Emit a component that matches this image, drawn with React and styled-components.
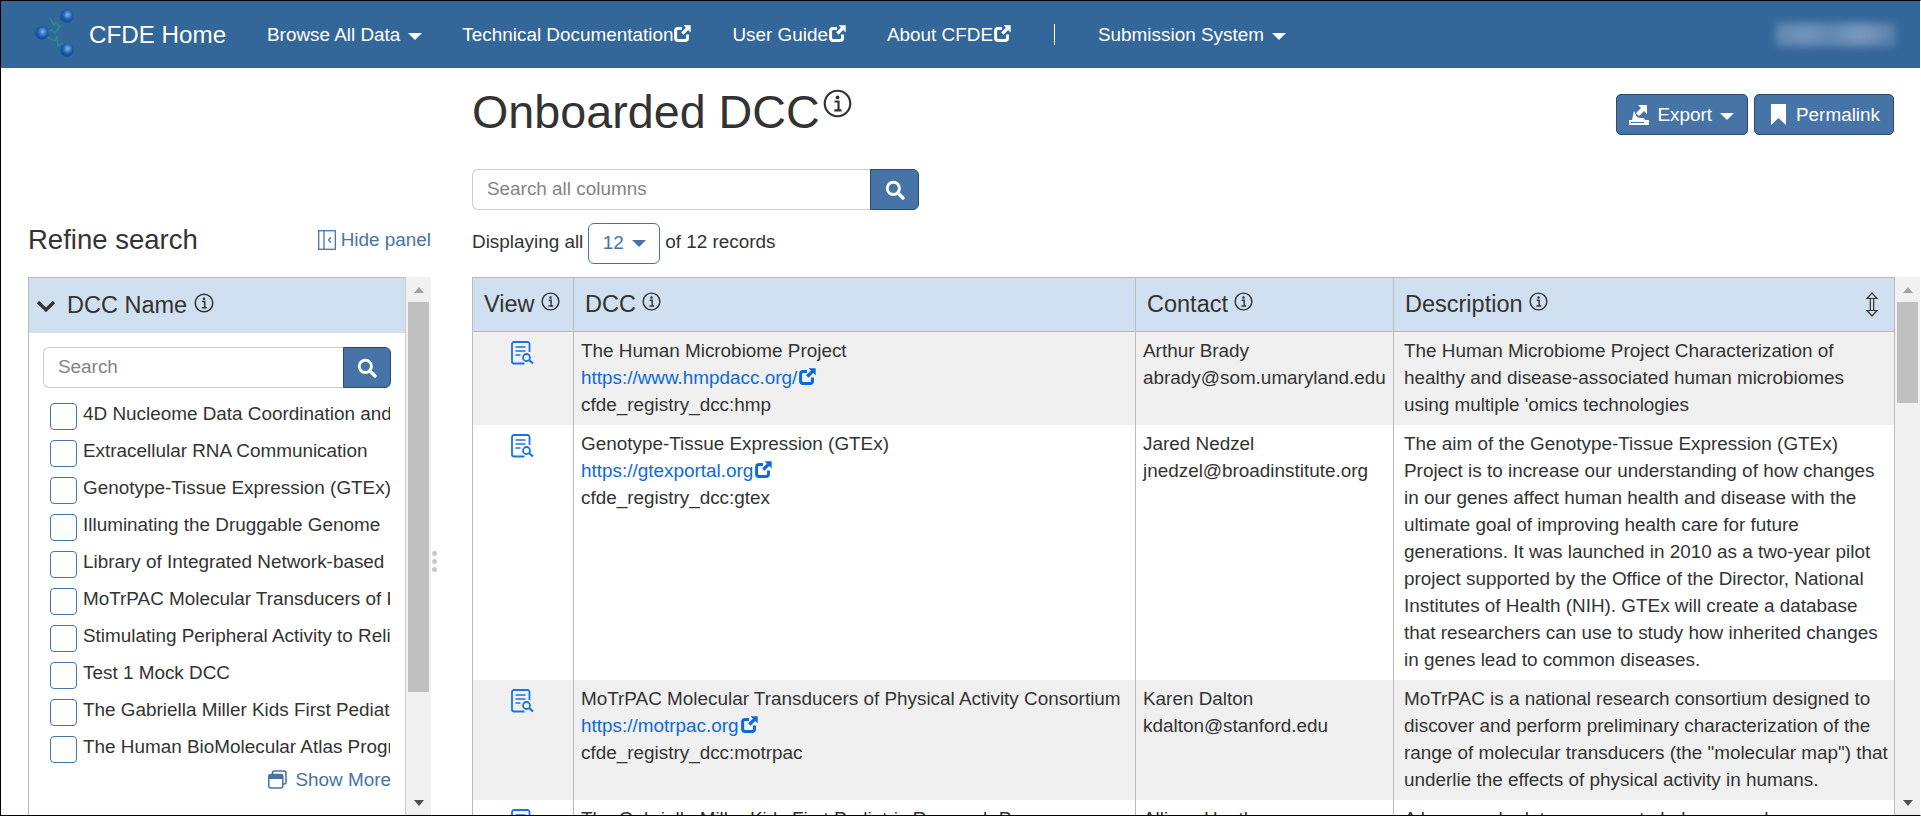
import React from 'react';
import styled, { createGlobalStyle } from 'styled-components';

const Global = createGlobalStyle`
  html, body { margin: 0; padding: 0; background: #fff; overflow: hidden; }
  * { box-sizing: border-box; }
`;
const Frame = styled.div`
  width: 1921px; height: 816px; border: 1px solid #000; border-right: 1px solid #fff;
  display: flex; flex-direction: column; overflow: hidden;
  font: 18.9px/27px "Liberation Sans", Arial, sans-serif; color: #333;
`;
const Navbar = styled.nav`
  height: 67px; flex: none; background: #336699; color: #fff;
  display: flex; align-items: center; position: relative;
`;
const Brand = styled.div`
  display: flex; align-items: center; width: 266px; padding-left: 34px; gap: 12px;
  font-size: 24.2px; padding-bottom: 1px;
`;
const NavItem = styled.span`
  display: inline-flex; align-items: center; gap: 1px; white-space: nowrap; margin-left: ${p => p.$ml}px;
`;
const Sep = styled.span`
  width: 1px; height: 21px; background: #fff; margin-left: ${p => p.$ml}px;
`;
const Caret = styled.span`
  display: inline-block; width: 0; height: 0; margin-left: ${p => p.$ml ?? 8}px; margin-top: 3px;
  border-left: 7.5px solid transparent; border-right: 7.5px solid transparent;
  border-top: 7px solid ${p => p.$c || '#fff'};
`;
const Blurred = styled.div`
  position: absolute; right: 24px; top: 22px; width: 120px; height: 23px;
  background: linear-gradient(90deg,#6a8fb6 0%,#7c9cc0 25%,#6a8fb6 45%,#86a3c6 70%,#5b83ad 100%);
  filter: blur(4px); opacity: .85;
`;
const Content = styled.div`
  flex: 1; min-height: 0; display: flex;
`;
const Sidebar = styled.aside`
  width: 430px; flex: none; display: flex; flex-direction: column; padding-left: 27px;
`;
const RefineRow = styled.div`
  height: 96px; margin-top: 113px; display: flex; justify-content: space-between; align-items: flex-start;
`;
const RefineTitle = styled.h2`
  margin: 43px 0 0; font-weight: 400; font-size: 27.5px; line-height: 32px;
`;
const HidePanel = styled.span`
  display: inline-flex; align-items: center; gap: 5px; color: #4674a7; margin-top: 46px; line-height: 25px;
`;
const FilterWrap = styled.div`
  flex: 1; min-height: 0; display: flex;
`;
const FilterBox = styled.div`
  width: 378px; border: 1px solid #bbb; border-bottom: 0; border-right: 1px solid #ccc;
`;
const FacetHead = styled.div`
  height: 55px; background: #d0e0f0; display: flex; align-items: center; padding-left: 7px;
  font-size: 23.5px; gap: 11px;
`;
const InfoSup = styled.span`
  display: inline-flex; margin-left: -4px; margin-top: -6px;
`;
const HeadInfo = styled.span`
  display: inline-block; line-height: 0; vertical-align: 1px; margin-left: 6px;
`;
const FacetBody = styled.div`
  padding: 14px 14px 0;
`;
const InputGroup = styled.div`
  display: flex; flex: none; height: ${p => p.$h}px; width: ${p => p.$w ? p.$w + 'px' : 'auto'};
`;
const SearchInput = styled.div`
  flex: 1; border: 1px solid #ccc; border-right: 0; border-radius: 6px 0 0 6px; background: #fff;
  color: #848484; display: flex; align-items: center; padding: 0 0 2px 14px;
`;
const SearchBtn = styled.div`
  width: ${p => p.$w}px; background: #4674a7; border: 1px solid #2e4a6b; border-radius: 0 6px 6px 0;
  display: flex; align-items: center; justify-content: center;
`;
const FacetList = styled.div`
  margin-top: 15px; padding-left: 7px; display: flex; flex-direction: column; gap: 10px;
`;
const FacetRow = styled.div`
  display: flex; align-items: center; height: 27px; gap: 6px; width: 340px;
`;
const Check = styled.span`
  width: 27px; height: 27px; flex: none; border: 1px solid #4674a7; border-radius: 4px; background: #fff;
`;
const FacetLabel = styled.span`
  white-space: nowrap; overflow: hidden; flex: 1; margin-top: -7px;
`;
const ShowMore = styled.div`
  display: flex; justify-content: flex-end; align-items: center; gap: 8px; color: #4674a7; margin-top: 3px; height: 27px;
  width: 348px;
`;
const Scrollbar = styled.div`
  width: ${p => p.$w}px; flex: none; background: #f1f1f1; display: flex; flex-direction: column; align-items: center; position: relative;
`;
const ScrollUp = styled.div`
  height: 25px; width: 100%; flex: none; display: flex; align-items: center; justify-content: center;
  &::before { content: ''; border-left: 5.5px solid transparent; border-right: 5.5px solid transparent; border-bottom: 6px solid #a3a3a3; }
`;
const ScrollThumb = styled.div`
  width: 21px; height: ${p => p.$h}px; flex: none; background: #c0c0c0;
`;
const ScrollDown = styled.div`
  position: absolute; bottom: 4px; left: 0; right: 0; height: 16px; display: flex; justify-content: center; align-items: center;
  &::before { content: ''; border-left: 5.5px solid transparent; border-right: 5.5px solid transparent; border-top: 6px solid #505050; }
`;
const Splitter = styled.div`
  width: 7px; flex: none; padding-top: 483px; display: flex; flex-direction: column; align-items: center; gap: 3px;
`;
const Dot = styled.span`
  width: 5px; height: 5px; border-radius: 50%; background: #c8c8c8;
`;
const Main = styled.main`
  flex: 1; min-width: 0; margin-left: 34px; display: flex; flex-direction: column;
`;
const TitleRow = styled.div`
  height: 101px; flex: none; display: flex; justify-content: space-between; align-items: flex-start;
`;
const Title = styled.h1`
  margin: 19px 0 0; font-weight: 400; font-size: 46.7px; line-height: 50px; display: flex;
`;
const InfoTitle = styled.span`
  display: inline-flex; margin-left: 3px; margin-top: 2px; align-self: flex-start;
`;
const Actions = styled.div`
  display: flex; gap: 6px; margin-top: 26px; margin-right: 26px;
`;
const ActionBtn = styled.div`
  height: 41px; display: flex; align-items: center; gap: ${p => p.$gap}px; padding: 0 13px 0 ${p => p.$pl}px; background: #4674a7;
  border: 1px solid #2e4a6b; border-radius: 5px; color: #fff;
`;
const CountRow = styled.div`
  margin-top: 13px; height: 41px; display: flex; align-items: center; gap: 5px; flex: none;
`;
const CountText = styled.span`
  margin-bottom: 4px;
`;
const CountSelect = styled.div`
  width: 72px; height: 41px; border: 1px solid #4674a7; border-radius: 6px; color: #4674a7;
  display: flex; align-items: center; justify-content: center; padding-bottom: 3px;
`;
const TableWrap = styled.div`
  margin-top: 13px; flex: 1; min-height: 0; display: flex;
`;
const TableClip = styled.div`
  flex: 1; min-width: 0; overflow: hidden; border-top: 1px solid #bbb; border-left: 1px solid #bbb; border-right: 1px solid #bbb;
`;
const Table = styled.table`
  width: 100%; border-collapse: separate; border-spacing: 0; table-layout: fixed;
`;
const Th = styled.th`
  height: 54px; background: #d0e0f0; font-weight: 400; font-size: 23.5px; text-align: left;
  padding: 0 10px 0 ${p => p.$pl}px; border-bottom: 1px solid #bbb; border-left: ${p => p.$first ? 0 : '1px solid #bbb'};
  white-space: nowrap; position: relative;
`;
const Td = styled.td`
  padding: 5px 6px 7px 7px; vertical-align: top; border-left: ${p => p.$first ? 0 : '1px solid #bbb'};
  background: ${p => p.$odd ? '#f0f0f0' : '#fff'}; overflow: hidden; white-space: ${p => p.$nowrap ? 'nowrap' : 'normal'};
  text-align: ${p => p.$center ? 'center' : 'left'};
`;
const DescTd = styled(Td)`
  padding-left: 10px; padding-right: 5px;
`;
const Line = styled.div`
  white-space: nowrap;
`;
const Link = styled.a`
  color: #0e6ad8; display: inline-flex; align-items: center; gap: 2px;
`;
const ResizeHandle = styled.span`
  position: absolute; right: 15px; top: 14px; display: flex;
`;
const ViewIconWrap = styled.span`
  display: inline-flex; margin-top: 4px; margin-left: -2px;
`;

const Info = ({ size = 19, color = '#333' }) => (
  <svg width={size} height={size} viewBox="0 0 20 20" fill="none">
    <circle cx="10" cy="10" r="8.8" stroke={color} strokeWidth="1.5" />
    <circle cx="10" cy="5.8" r="1.3" fill={color} />
    <path d="M8 8.6h2.700v6M7.800 14.800h5" stroke={color} strokeWidth="1.500" />
  </svg>
);
const Ext = ({ color = '#fff', size = 17 }) => (
  <svg width={size} height={size} viewBox="0 0 16 16" fill="none" style={{ marginBottom: 3 }}>
    <path d="M7.500 3.300H3.800A2.300 2.300 0 0 0 1.500 5.600v6.600a2.300 2.300 0 0 0 2.300 2.300h6.600a2.300 2.300 0 0 0 2.300-2.300V9" stroke={color} strokeWidth="2.800" />
    <path d="M9 .3h6.700V7l-2.400-2.400-4.300 4.500-2.300-2.300 4.500-4.300z" fill={color} />
  </svg>
);
const SearchIcon = ({ size = 20 }) => (
  <svg width={size} height={size} viewBox="0 0 18 18" fill="none">
    <circle cx="7.500" cy="7.500" r="5.500" stroke="#fff" strokeWidth="2.600" />
    <path d="M11.600 11.600l4.600 4.600" stroke="#fff" strokeWidth="3" strokeLinecap="round" />
  </svg>
);
const ViewIcon = () => (
  <svg width="23" height="24" viewBox="0 0 23 24" fill="none" stroke="#1a73e0" strokeWidth="1.800">
    <path d="M18.500 11V3a2 2 0 0 0-2-2H3a2 2 0 0 0-2 2v17.500a2 2 0 0 0 2 2h10.500" />
    <path d="M4.500 6h10M4.500 10h10M4.500 14h5" strokeWidth="1.600" />
    <circle cx="15.500" cy="16.500" r="3.500" />
    <path d="M18 19l4 3.500" strokeWidth="2.200" />
  </svg>
);
const Logo = () => (
  <svg width="42" height="50" viewBox="0 0 42 50" fill="none">
    <defs>
      <radialGradient id="b" cx=".55" cy=".4" r=".6">
        <stop offset="0" stopColor="#8fb4dd" />
        <stop offset=".6" stopColor="#1b5cb0" />
        <stop offset="1" stopColor="#0b4b9e" />
      </radialGradient>
    </defs>
    <path d="M15 9l4 7 2-3 3 5 2-2-6 8-4-3-5 3" stroke="#2e8b8b" strokeWidth="1.500" />
    <path d="M12 28l8 4 2-5 1 10 4-3 4 6" stroke="#2e8b8b" strokeWidth="1.500" />
    <circle cx="32" cy="7" r="6.800" fill="url(#b)" />
    <circle cx="7" cy="24" r="6.800" fill="url(#b)" />
    <circle cx="32" cy="41" r="6.800" fill="url(#b)" />
  </svg>
);
const HideIcon = () => (
  <svg width="18" height="20" viewBox="0 0 18 20" fill="none" stroke="#4674a7" strokeWidth="1.300">
    <rect x=".7" y=".7" width="16.600" height="18.600" />
    <path d="M6 .7v18.600" />
    <path d="M13 7.500l-2.500 2.500 2.500 2.500" />
  </svg>
);
const ShowMoreIcon = () => (
  <svg width="19" height="19" viewBox="0 0 19 19" fill="none">
    <rect x="4.500" y="1" width="13.500" height="13" rx="2" stroke="#4674a7" strokeWidth="1.500" />
    <rect x=".8" y="4.500" width="14" height="13.500" rx="2" fill="#fff" stroke="#4674a7" strokeWidth="1.500" />
    <rect x=".8" y="4.500" width="14" height="4.500" rx="1" fill="#4674a7" />
  </svg>
);
const ExportIcon = () => (
  <svg width="20" height="20" viewBox="0 0 20 20" fill="#fff">
    <path d="M9 0h9v9l-3-3-5 5-3-3 5-5z" />
    <path d="M5 6l3 6 3 1h4l1 2H3z" />
    <path d="M0 15h20v5H0zM2 17v1h13v-1z" fillRule="evenodd" />
  </svg>
);
const BookmarkIcon = () => (
  <svg width="15" height="21" viewBox="0 0 15 21" fill="#fff">
    <path d="M0 0h15v21L7.500 14 0 21z" />
  </svg>
);
const ResizeIcon = () => (
  <svg width="14" height="25" viewBox="0 0 14 25" fill="none" stroke="#333" strokeWidth="1.200">
    <path d="M7 1L2 6.500h3.300V18.500H2L7 24l5-5.500H8.700V6.500H12z" />
    <path d="M3.500 6.500h7M3.500 18.500h7" />
  </svg>
);

const facets = [
  '4D Nucleome Data Coordination and Integration Center',
  'Extracellular RNA Communication',
  'Genotype-Tissue Expression (GTEx)',
  'Illuminating the Druggable Genome',
  'Library of Integrated Network-based Cellular Signatures',
  'MoTrPAC Molecular Transducers of Physical Activity Consortium',
  'Stimulating Peripheral Activity to Relieve Conditions',
  'Test 1 Mock DCC',
  'The Gabriella Miller Kids First Pediatric Research Program',
  'The Human BioMolecular Atlas Program',
];

const rows = [
  {
    name: 'The Human Microbiome Project', url: 'https://www.hmpdacc.org/', id: 'cfde_registry_dcc:hmp',
    person: 'Arthur Brady', mail: 'abrady@som.umaryland.edu',
    desc: "The Human Microbiome Project Characterization of healthy and disease-associated human microbiomes using multiple 'omics technologies",
  },
  {
    name: 'Genotype-Tissue Expression (GTEx)', url: 'https://gtexportal.org', id: 'cfde_registry_dcc:gtex',
    person: 'Jared Nedzel', mail: 'jnedzel@broadinstitute.org',
    desc: 'The aim of the Genotype-Tissue Expression (GTEx) Project is to increase our understanding of how changes in our genes affect human health and disease with the ultimate goal of improving health care for future generations. It was launched in 2010 as a two-year pilot project supported by the Office of the Director, National Institutes of Health (NIH). GTEx will create a database that researchers can use to study how inherited changes in genes lead to common diseases.',
  },
  {
    name: 'MoTrPAC Molecular Transducers of Physical Activity Consortium', url: 'https://motrpac.org', id: 'cfde_registry_dcc:motrpac',
    person: 'Karen Dalton', mail: 'kdalton@stanford.edu',
    desc: 'MoTrPAC is a national research consortium designed to discover and perform preliminary characterization of the range of molecular transducers (the "molecular map") that underlie the effects of physical activity in humans.',
  },
  {
    name: 'The Gabriella Miller Kids First Pediatric Research Program', url: 'https://commonfund.nih.gov/kidsfirst', id: 'cfde_registry_dcc:kidsfirst',
    person: 'Allison Heath', mail: 'heathap@chop.edu',
    desc: 'A large-scale data resource to help researchers uncover new insights into the biology of childhood cancer.',
  },
];

export default function App() {
  return (
    <>
      <Global />
      <Frame>
        <Navbar>
          <Brand><Logo />CFDE Home</Brand>
          <NavItem $ml={0}>Browse All Data<Caret $ml={7} /></NavItem>
          <NavItem $ml={40}>Technical Documentation<Ext /></NavItem>
          <NavItem $ml={41}>User Guide<Ext /></NavItem>
          <NavItem $ml={41}>About CFDE<Ext /></NavItem>
          <Sep $ml={43} />
          <NavItem $ml={43}>Submission System<Caret $ml={7} /></NavItem>
          <Blurred />
        </Navbar>
        <Content>
          <Sidebar>
            <RefineRow>
              <RefineTitle>Refine search</RefineTitle>
              <HidePanel><HideIcon />Hide panel</HidePanel>
            </RefineRow>
            <FilterWrap>
              <FilterBox>
                <FacetHead>
                  <svg width="20" height="14" viewBox="0 0 20 14" fill="none">
                    <path d="M2 3l8 8 8-8" stroke="#333" strokeWidth="3.200" />
                  </svg>
                  <span>DCC Name</span>
                  <InfoSup><Info size={20} /></InfoSup>
                </FacetHead>
                <FacetBody>
                  <InputGroup $h={41}>
                    <SearchInput>Search</SearchInput>
                    <SearchBtn $w={48}><SearchIcon /></SearchBtn>
                  </InputGroup>
                  <FacetList>
                    {facets.map(f => (
                      <FacetRow key={f}><Check /><FacetLabel>{f}</FacetLabel></FacetRow>
                    ))}
                  </FacetList>
                  <ShowMore><ShowMoreIcon />Show More</ShowMore>
                </FacetBody>
              </FilterBox>
              <Scrollbar $w={25}>
                <ScrollUp />
                <ScrollThumb $h={390} />
                <ScrollDown />
              </Scrollbar>
            </FilterWrap>
          </Sidebar>
          <Splitter><Dot /><Dot /><Dot /></Splitter>
          <Main>
            <TitleRow>
              <Title>Onboarded DCC<InfoTitle><Info size={29} /></InfoTitle></Title>
              <Actions>
                <ActionBtn $pl={12} $gap={8}><ExportIcon />Export<Caret $ml={0} /></ActionBtn>
                <ActionBtn $pl={16} $gap={10}><BookmarkIcon />Permalink</ActionBtn>
              </Actions>
            </TitleRow>
            <InputGroup $h={41} $w={447}>
              <SearchInput>Search all columns</SearchInput>
              <SearchBtn $w={49}><SearchIcon /></SearchBtn>
            </InputGroup>
            <CountRow>
              <CountText>Displaying all</CountText>
              <CountSelect>12<Caret $c="#4674a7" /></CountSelect>
              <CountText>of 12 records</CountText>
            </CountRow>
            <TableWrap>
              <TableClip>
                <Table>
                  <colgroup>
                    <col style={{ width: 100 }} />
                    <col style={{ width: 562 }} />
                    <col style={{ width: 258 }} />
                    <col />
                  </colgroup>
                  <thead>
                    <tr>
                      <Th $first $pl={11}>View<HeadInfo><Info /></HeadInfo></Th>
                      <Th $pl={11}>DCC<HeadInfo><Info /></HeadInfo></Th>
                      <Th $pl={11}>Contact<HeadInfo><Info /></HeadInfo></Th>
                      <Th $pl={11}>Description<HeadInfo><Info /></HeadInfo>
                        <ResizeHandle><ResizeIcon /></ResizeHandle>
                      </Th>
                    </tr>
                  </thead>
                  <tbody>
                    {rows.map((r, i) => (
                      <tr key={r.id}>
                        <Td $first $center $odd={i % 2 === 0}><ViewIconWrap><ViewIcon /></ViewIconWrap></Td>
                        <Td $odd={i % 2 === 0} $nowrap>
                          <Line>{r.name}</Line>
                          <Line><Link>{r.url}<Ext color="#0e6ad8" /></Link></Line>
                          <Line>{r.id}</Line>
                        </Td>
                        <Td $odd={i % 2 === 0} $nowrap>
                          <Line>{r.person}</Line>
                          <Line>{r.mail}</Line>
                        </Td>
                        <DescTd $odd={i % 2 === 0}>{r.desc}</DescTd>
                      </tr>
                    ))}
                  </tbody>
                </Table>
              </TableClip>
              <Scrollbar $w={25}>
                <ScrollUp />
                <ScrollThumb $h={101} />
                <ScrollDown />
              </Scrollbar>
            </TableWrap>
          </Main>
        </Content>
      </Frame>
    </>
  );
}
